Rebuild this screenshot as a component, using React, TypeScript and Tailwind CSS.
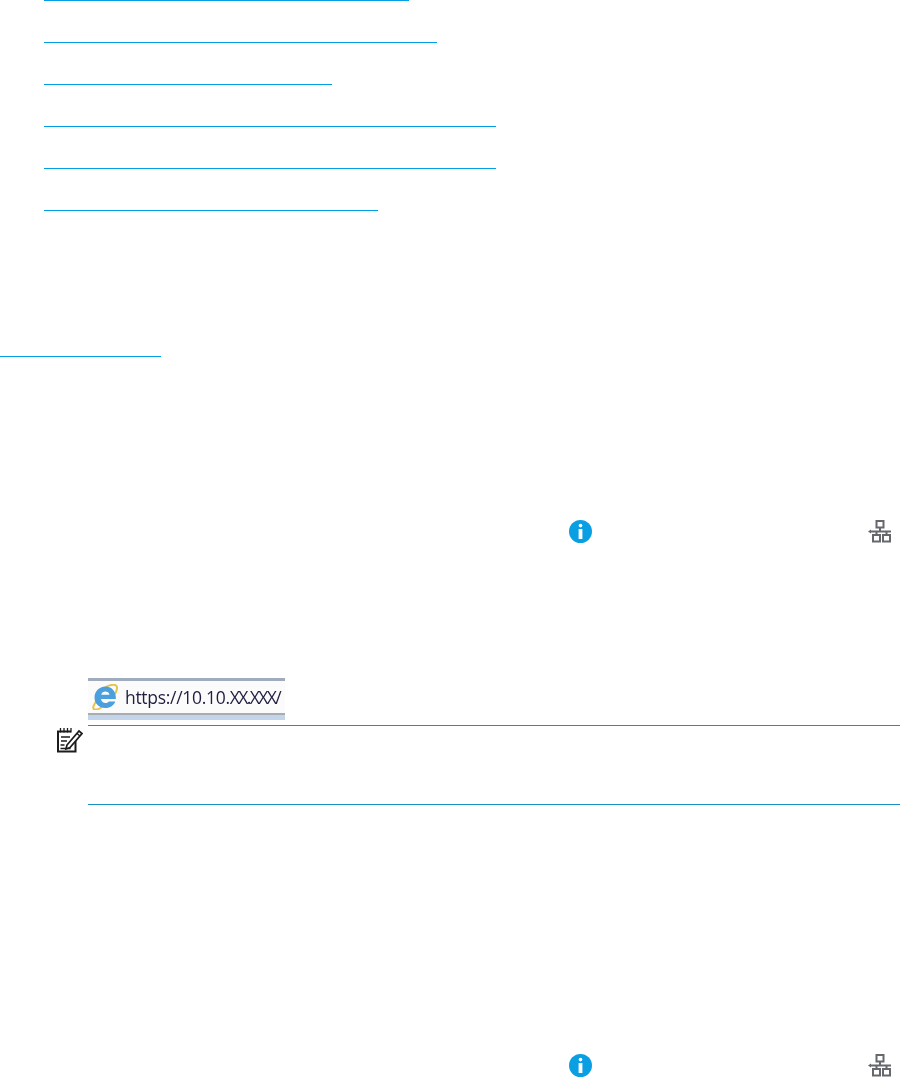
const linkWidths = ["w-[365px]", "w-[393px]", "w-[288px]", "w-[452px]", "w-[452px]", "w-[334px]"];

function InfoIcon() {
  return (
    <svg viewBox="0 0 23 23" className="h-[23px] w-[23px] shrink-0">
      <circle cx="11.5" cy="11.5" r="11.5" fill="#0a9fe3" />
      <circle cx="11.5" cy="5.6" r="1.8" fill="#fff" />
      <rect x="9.6" y="9" width="3.8" height="10" fill="#fff" />
    </svg>
  );
}

function NetworkIcon() {
  return (
    <svg viewBox="0 0 23 23" className="h-[23px] w-[23px] shrink-0" fill="none" stroke="#66686d" strokeWidth="2">
      <rect x="8.500" y="1" width="7" height="6.500" />
      <path d="M12 7.500v4M2 11.500h21M8.500 11.500v3.500M18.500 11.500v3.500" />
      <rect x="5" y="15" width="7" height="6.500" />
      <rect x="15" y="15" width="7" height="6.500" />
      <path d="M0 11.500l3-2v4z" fill="#66686d" stroke="none" />
    </svg>
  );
}

function IeIcon() {
  return (
    <svg viewBox="0 0 26 26" className="h-[26px] w-[26px] shrink-0 blur-[0.4px]" fill="none">
      <path d="M5 16c-4 6-5 9-2 9.500 2 .3 5-1 8-3" stroke="#e9c24a" strokeWidth="2" strokeLinecap="round" />
      <path d="M13 3.500c5-3 10-3.500 11.500-1.500 1 1.500.5 4-1 7" stroke="#e9c24a" strokeWidth="2" strokeLinecap="round" />
      <path
        d="M13.500 2.500C7 2.500 2.500 7.500 2.500 13.500S7 24 13.500 24c4.700 0 8.300-2.500 9.800-6.500h-6.500c-2 2.700-7.300 2-7.800-2.500h14.800c.8-7-3.800-12.500-10.300-12.500ZM9.300 10.800c.6-4.300 7.600-4.300 8.200 0Z"
        fill="#4a9fdc"
      />
    </svg>
  );
}

function NoteIcon() {
  return (
    <svg viewBox="0 0 26 26" className="h-[26px] w-[26px] shrink-0" fill="none" stroke="#1c1c1c">
      <path d="M18.500 11V24.500H1V4.500H14" strokeWidth="2" />
      <path d="M3.500 1v4.500M7 1v4.500M10.500 1v4.500M14 1v4.500" strokeWidth="1.300" />
      <path d="M4 10h9M4 14h6M3.500 18h4M3.500 21.500h10" strokeWidth="1.300" />
      <path d="M10 18L22 4l3 2.500L13 20.500l-4 1.500Z" fill="#fff" strokeWidth="1.700" />
      <path d="M20 6.500l3 2.500" strokeWidth="1.300" />
    </svg>
  );
}

function IconRow({ className }: { className: string }) {
  return (
    <div className={`flex gap-[276px] pl-[569px] ${className}`}>
      <InfoIcon />
      <NetworkIcon />
    </div>
  );
}

export default function App() {
  return (
    <div className="flex h-[1078px] w-[900px] flex-col overflow-hidden bg-white">
      <div className="flex flex-col gap-[41px] pl-[44px]">
        {linkWidths.map((w, i) => (
          <div key={i} className={`h-px bg-[#009fe3] ${w}`} />
        ))}
      </div>
      <div className="mt-[145px] h-px w-[161px] bg-[#009fe3]" />
      <IconRow className="mt-[163px]" />
      <div className="ml-[88px] mt-[135px] flex h-[42px] w-[197px] flex-col overflow-hidden">
        <div className="h-[3px] bg-[#a0acbd]" />
        <div className="flex h-[32px] items-center gap-[7px] bg-[#fbfbfb] pl-[4px]">
          <IeIcon />
          <span className="whitespace-nowrap font-['Open_Sans',sans-serif] text-[17.5px] font-medium tracking-[-0.3px] text-[#1f1e40] blur-[0.4px]">
            https://10.10.<span className="tracking-[-1.6px]">XX.XXX</span>/
          </span>
        </div>
        <div className="h-[2px] bg-[#a9acb0]" />
        <div className="h-[5px] bg-[#c3d5ea]" />
      </div>
      <div className="mt-[5px] flex gap-[5px] pl-[57px]">
        <div className="pt-[2px]">
          <NoteIcon />
        </div>
        <div className="flex h-[80px] flex-1 flex-col justify-between">
          <div className="h-px bg-[#1b8fc4]" />
          <div className="h-px bg-[#1b8fc4]" />
        </div>
      </div>
      <IconRow className="mt-[249px]" />
    </div>
  );
}
